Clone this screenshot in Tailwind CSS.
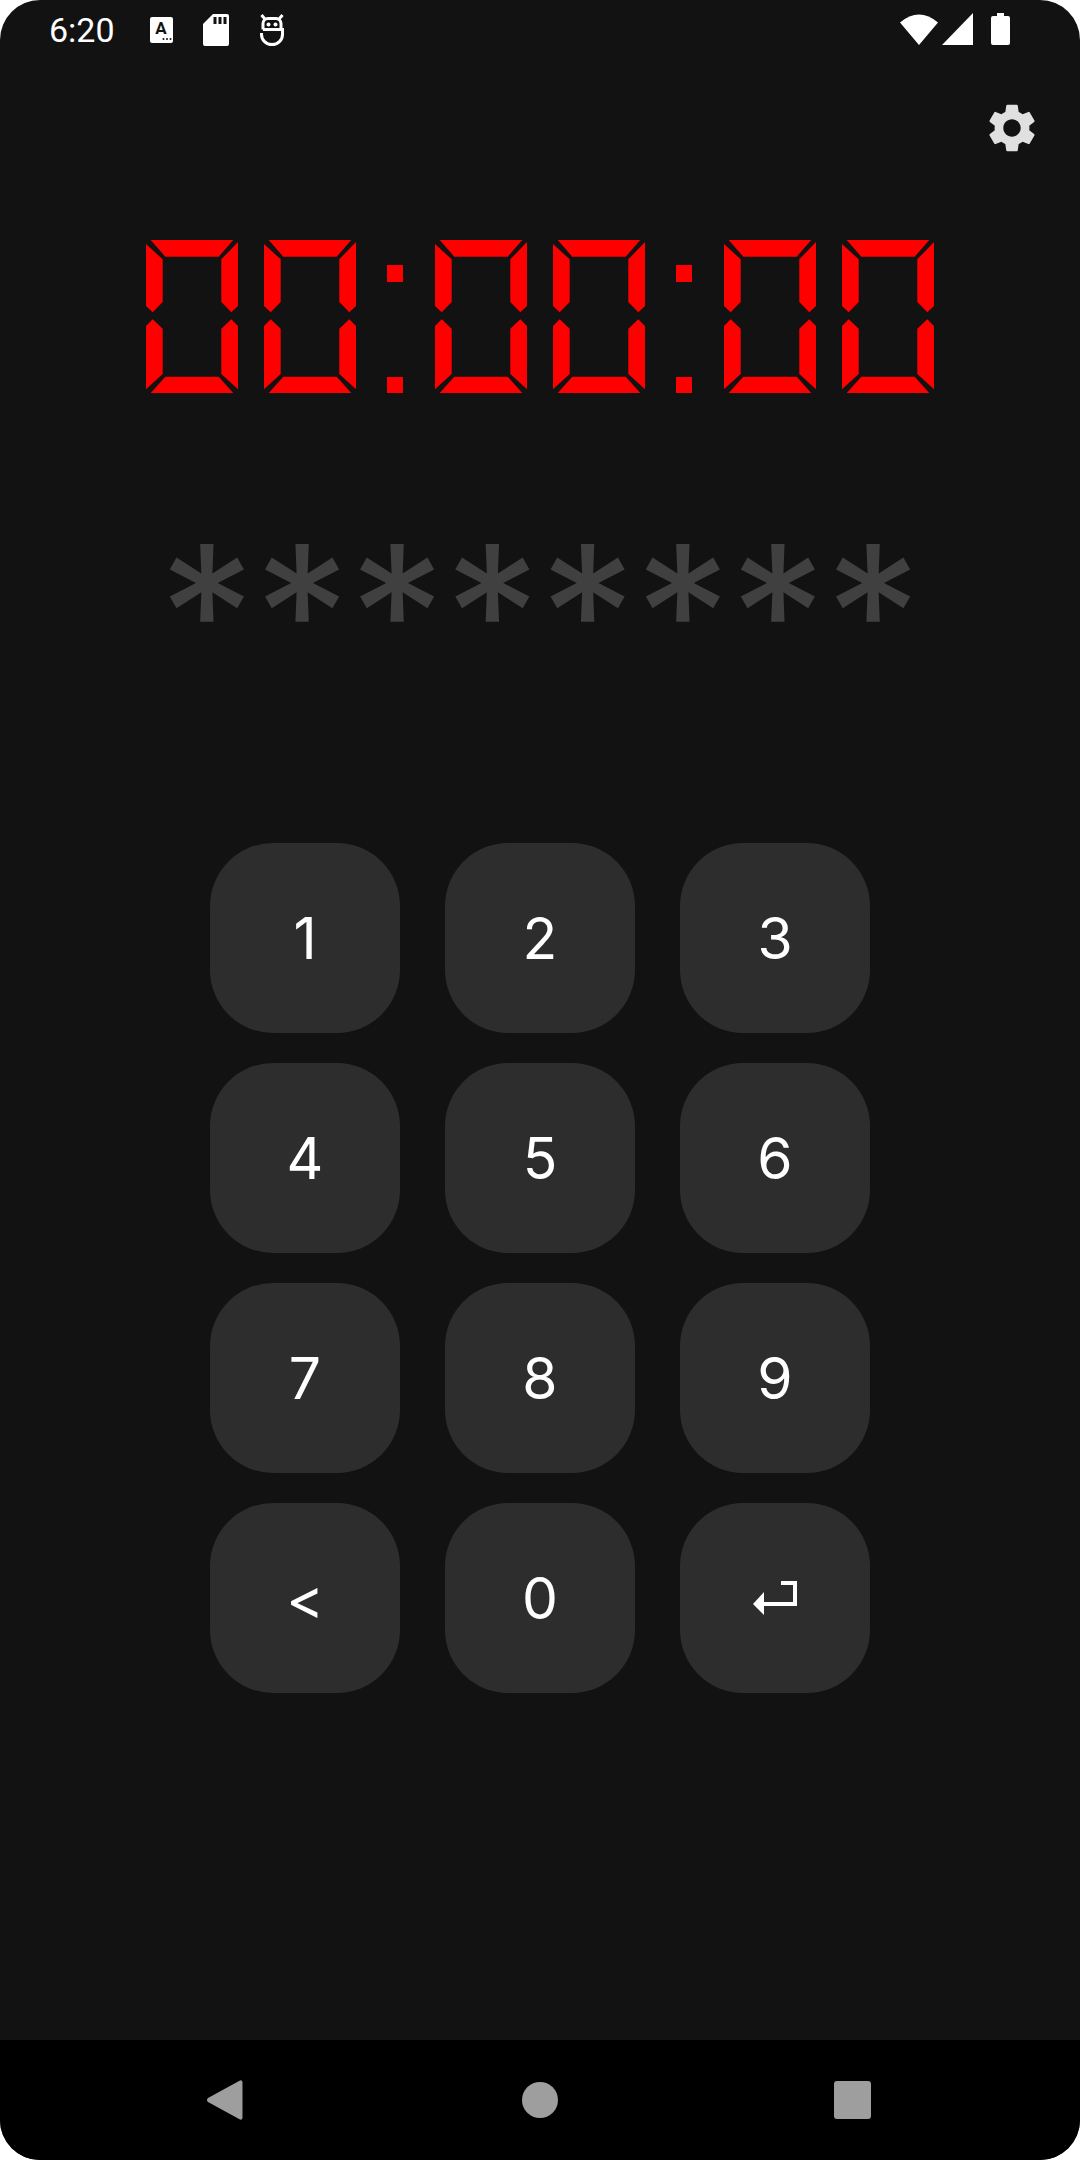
<!DOCTYPE html>
<html lang="en">
<head>
    <meta charset="UTF-8">
    <title>Timer lock</title>
    <script src="https://cdn.jsdelivr.net/npm/@tailwindcss/browser@4"></script>
</head>
<body class="bg-white">
    <div class="w-[1080px] h-[2160px] flex flex-col bg-[#121212] rounded-[40px] overflow-hidden font-['Inter',sans-serif] text-white">

        <!-- Status bar -->
        <div class="h-[60px] flex items-center pl-[49px] pr-[70px] shrink-0">
            <span class="text-[34px] leading-none font-['Roboto',sans-serif] w-[101px]">6:20</span>
            <svg width="23" height="26" viewBox="0 0 23 26"><rect width="23" height="26" rx="2" fill="#fff"/><text x="11" y="17" text-anchor="middle" font-family="Roboto" font-weight="700" font-size="17" fill="#121212">A</text><circle cx="13.500" cy="22" r="1" fill="#121212"/><circle cx="17" cy="22" r="1" fill="#121212"/><circle cx="20.500" cy="22" r="1" fill="#121212"/></svg>
            <svg class="ml-[30px]" width="26" height="32" viewBox="0 0 26 32"><path d="M10 0h14a2 2 0 0 1 2 2v28a2 2 0 0 1-2 2H2a2 2 0 0 1-2-2V10z" fill="#fff"/><rect x="10.500" y="3" width="3" height="7" fill="#121212"/><rect x="15.500" y="3" width="3" height="7" fill="#121212"/><rect x="20.500" y="3" width="3" height="7" fill="#121212"/></svg>
            <svg class="ml-[31px]" width="24" height="32" viewBox="0 0 24 32" fill="none" stroke="#fff" stroke-width="3"><path d="M3 15.500V9.500a5 5 0 0 1 5-5h8a5 5 0 0 1 5 5v6M1.500 1l3 3.500M22.500 1l-3 3.500"/><path d="M3 15.500h19.500v5a10.500 10 0 0 1-21 0V19"/><circle cx="8.500" cy="10.500" r="2" fill="#fff" stroke="none"/><circle cx="15.500" cy="10.500" r="2" fill="#fff" stroke="none"/></svg>
            <div class="ml-auto flex items-center -mt-[2px]">
                <svg width="38" height="32" viewBox="0 0 38 32"><path d="M0 9.500Q19-6.500 38 9.500L19 32z" fill="#fff"/></svg>
                <svg class="ml-[4px]" width="31" height="32" viewBox="0 0 31 32"><path d="M31 0v32H0z" fill="#fff"/></svg>
                <svg class="ml-[18px]" width="19" height="32" viewBox="0 0 19 32"><path d="M6 0h7v3h4a2 2 0 0 1 2 2v25a2 2 0 0 1-2 2H2a2 2 0 0 1-2-2V5a2 2 0 0 1 2-2h4z" fill="#fff"/></svg>
            </div>
        </div>

        <!-- Settings -->
        <div class="flex justify-end pr-[39px] pt-[39px] shrink-0">
            <svg width="58" height="58" viewBox="0 0 24 24" fill="#e0e0e0"><path d="M19.140 12.940c.04-.3.060-.61.060-.94 0-.32-.02-.64-.07-.94l2.030-1.580a.49.49 0 0 0 .12-.61l-1.920-3.320a.488.488 0 0 0-.59-.22l-2.390.96c-.5-.38-1.030-.7-1.620-.94l-.36-2.540a.484.484 0 0 0-.48-.41h-3.840c-.24 0-.43.170-.47.410l-.36 2.540c-.59.240-1.130.570-1.620.94l-2.390-.96c-.22-.08-.47 0-.59.220L2.740 8.870c-.12.210-.08.470.12.610l2.030 1.580c-.05.300-.09.630-.09.940s.02.640.07.940l-2.030 1.580a.49.49 0 0 0-.12.610l1.920 3.320c.12.220.37.290.59.220l2.390-.96c.5.380 1.030.7 1.620.94l.36 2.540c.05.240.24.410.48.410h3.840c.24 0 .44-.17.47-.41l.36-2.540c.59-.24 1.130-.56 1.620-.94l2.390.96c.22.080.47 0 .59-.22l1.920-3.320c.12-.22.070-.47-.12-.61l-2.010-1.580zM12 15.600c-1.980 0-3.600-1.620-3.600-3.600s1.620-3.600 3.600-3.600 3.600 1.620 3.600 3.600-1.620 3.600-3.600 3.600z"/></svg>
        </div>

        <!-- LED timer: segments are CSS shapes -->
        <div role="timer" aria-label="00:00:00" class="mt-[83px] ml-[146px] h-[153px] flex shrink-0">
            <div class="relative w-[92px] h-[153px]">
                <div class="absolute inset-0 bg-[#ff0000] [clip-path:polygon(4.700px_0,87.300px_0,72.700px_16.700px,19.300px_16.700px)]"></div>
                <div class="absolute inset-0 bg-[#ff0000] [clip-path:polygon(0_4px,16.700px_19.300px,16.700px_62px,6.700px_72.300px,0_66px)]"></div>
                <div class="absolute inset-0 bg-[#ff0000] [clip-path:polygon(92px_2px,75.300px_19.300px,75.300px_62px,85.300px_72.300px,92px_66px)]"></div>
                <div class="absolute inset-0 bg-[#ff0000] [clip-path:polygon(0_86px,6.700px_79.300px,16.700px_88.700px,16.700px_134px,0_149.300px)]"></div>
                <div class="absolute inset-0 bg-[#ff0000] [clip-path:polygon(92px_86px,85.300px_79.300px,75.300px_88.700px,75.300px_134px,92px_149.300px)]"></div>
                <div class="absolute inset-0 bg-[#ff0000] [clip-path:polygon(4.700px_153px,19.300px_136.700px,72.700px_136.700px,87.300px_153px)]"></div>
            </div>
            <div class="relative w-[92px] h-[153px] ml-[26px]">
                <div class="absolute inset-0 bg-[#ff0000] [clip-path:polygon(4.700px_0,87.300px_0,72.700px_16.700px,19.300px_16.700px)]"></div>
                <div class="absolute inset-0 bg-[#ff0000] [clip-path:polygon(0_4px,16.700px_19.300px,16.700px_62px,6.700px_72.300px,0_66px)]"></div>
                <div class="absolute inset-0 bg-[#ff0000] [clip-path:polygon(92px_2px,75.300px_19.300px,75.300px_62px,85.300px_72.300px,92px_66px)]"></div>
                <div class="absolute inset-0 bg-[#ff0000] [clip-path:polygon(0_86px,6.700px_79.300px,16.700px_88.700px,16.700px_134px,0_149.300px)]"></div>
                <div class="absolute inset-0 bg-[#ff0000] [clip-path:polygon(92px_86px,85.300px_79.300px,75.300px_88.700px,75.300px_134px,92px_149.300px)]"></div>
                <div class="absolute inset-0 bg-[#ff0000] [clip-path:polygon(4.700px_153px,19.300px_136.700px,72.700px_136.700px,87.300px_153px)]"></div>
            </div>
            <div class="w-[16px] h-[153px] ml-[31px] pt-[25px] flex flex-col justify-between">
                <div class="h-[17px] bg-[#ff0000]"></div>
                <div class="h-[16px] bg-[#ff0000]"></div>
            </div>
            <div class="relative w-[92px] h-[153px] ml-[32px]">
                <div class="absolute inset-0 bg-[#ff0000] [clip-path:polygon(4.700px_0,87.300px_0,72.700px_16.700px,19.300px_16.700px)]"></div>
                <div class="absolute inset-0 bg-[#ff0000] [clip-path:polygon(0_4px,16.700px_19.300px,16.700px_62px,6.700px_72.300px,0_66px)]"></div>
                <div class="absolute inset-0 bg-[#ff0000] [clip-path:polygon(92px_2px,75.300px_19.300px,75.300px_62px,85.300px_72.300px,92px_66px)]"></div>
                <div class="absolute inset-0 bg-[#ff0000] [clip-path:polygon(0_86px,6.700px_79.300px,16.700px_88.700px,16.700px_134px,0_149.300px)]"></div>
                <div class="absolute inset-0 bg-[#ff0000] [clip-path:polygon(92px_86px,85.300px_79.300px,75.300px_88.700px,75.300px_134px,92px_149.300px)]"></div>
                <div class="absolute inset-0 bg-[#ff0000] [clip-path:polygon(4.700px_153px,19.300px_136.700px,72.700px_136.700px,87.300px_153px)]"></div>
            </div>
            <div class="relative w-[92px] h-[153px] ml-[26px]">
                <div class="absolute inset-0 bg-[#ff0000] [clip-path:polygon(4.700px_0,87.300px_0,72.700px_16.700px,19.300px_16.700px)]"></div>
                <div class="absolute inset-0 bg-[#ff0000] [clip-path:polygon(0_4px,16.700px_19.300px,16.700px_62px,6.700px_72.300px,0_66px)]"></div>
                <div class="absolute inset-0 bg-[#ff0000] [clip-path:polygon(92px_2px,75.300px_19.300px,75.300px_62px,85.300px_72.300px,92px_66px)]"></div>
                <div class="absolute inset-0 bg-[#ff0000] [clip-path:polygon(0_86px,6.700px_79.300px,16.700px_88.700px,16.700px_134px,0_149.300px)]"></div>
                <div class="absolute inset-0 bg-[#ff0000] [clip-path:polygon(92px_86px,85.300px_79.300px,75.300px_88.700px,75.300px_134px,92px_149.300px)]"></div>
                <div class="absolute inset-0 bg-[#ff0000] [clip-path:polygon(4.700px_153px,19.300px_136.700px,72.700px_136.700px,87.300px_153px)]"></div>
            </div>
            <div class="w-[16px] h-[153px] ml-[31px] pt-[25px] flex flex-col justify-between">
                <div class="h-[17px] bg-[#ff0000]"></div>
                <div class="h-[16px] bg-[#ff0000]"></div>
            </div>
            <div class="relative w-[92px] h-[153px] ml-[32px]">
                <div class="absolute inset-0 bg-[#ff0000] [clip-path:polygon(4.700px_0,87.300px_0,72.700px_16.700px,19.300px_16.700px)]"></div>
                <div class="absolute inset-0 bg-[#ff0000] [clip-path:polygon(0_4px,16.700px_19.300px,16.700px_62px,6.700px_72.300px,0_66px)]"></div>
                <div class="absolute inset-0 bg-[#ff0000] [clip-path:polygon(92px_2px,75.300px_19.300px,75.300px_62px,85.300px_72.300px,92px_66px)]"></div>
                <div class="absolute inset-0 bg-[#ff0000] [clip-path:polygon(0_86px,6.700px_79.300px,16.700px_88.700px,16.700px_134px,0_149.300px)]"></div>
                <div class="absolute inset-0 bg-[#ff0000] [clip-path:polygon(92px_86px,85.300px_79.300px,75.300px_88.700px,75.300px_134px,92px_149.300px)]"></div>
                <div class="absolute inset-0 bg-[#ff0000] [clip-path:polygon(4.700px_153px,19.300px_136.700px,72.700px_136.700px,87.300px_153px)]"></div>
            </div>
            <div class="relative w-[92px] h-[153px] ml-[26px]">
                <div class="absolute inset-0 bg-[#ff0000] [clip-path:polygon(4.700px_0,87.300px_0,72.700px_16.700px,19.300px_16.700px)]"></div>
                <div class="absolute inset-0 bg-[#ff0000] [clip-path:polygon(0_4px,16.700px_19.300px,16.700px_62px,6.700px_72.300px,0_66px)]"></div>
                <div class="absolute inset-0 bg-[#ff0000] [clip-path:polygon(92px_2px,75.300px_19.300px,75.300px_62px,85.300px_72.300px,92px_66px)]"></div>
                <div class="absolute inset-0 bg-[#ff0000] [clip-path:polygon(0_86px,6.700px_79.300px,16.700px_88.700px,16.700px_134px,0_149.300px)]"></div>
                <div class="absolute inset-0 bg-[#ff0000] [clip-path:polygon(92px_86px,85.300px_79.300px,75.300px_88.700px,75.300px_134px,92px_149.300px)]"></div>
                <div class="absolute inset-0 bg-[#ff0000] [clip-path:polygon(4.700px_153px,19.300px_136.700px,72.700px_136.700px,87.300px_153px)]"></div>
            </div>
        </div>

        <!-- Code mask -->
        <div class="mt-[160px] h-[120px] flex justify-center items-center text-[190px] leading-none font-normal text-[#404040] shrink-0">********</div>

        <!-- Keypad -->
        <div class="mt-[170px] ml-[210px] grid grid-cols-[190px_190px_190px] auto-rows-[190px] gap-x-[45px] gap-y-[30px] text-[57px] font-[380] shrink-0">
            <div class="rounded-[63px] bg-[#2d2d2d] flex items-center justify-center pt-[2px]">1</div>
            <div class="rounded-[63px] bg-[#2d2d2d] flex items-center justify-center pt-[2px]">2</div>
            <div class="rounded-[63px] bg-[#2d2d2d] flex items-center justify-center pt-[2px]">3</div>
            <div class="rounded-[63px] bg-[#2d2d2d] flex items-center justify-center pt-[2px]">4</div>
            <div class="rounded-[63px] bg-[#2d2d2d] flex items-center justify-center pt-[2px]">5</div>
            <div class="rounded-[63px] bg-[#2d2d2d] flex items-center justify-center pt-[2px]">6</div>
            <div class="rounded-[63px] bg-[#2d2d2d] flex items-center justify-center pt-[2px]">7</div>
            <div class="rounded-[63px] bg-[#2d2d2d] flex items-center justify-center pt-[2px]">8</div>
            <div class="rounded-[63px] bg-[#2d2d2d] flex items-center justify-center pt-[2px]">9</div>
            <div class="rounded-[63px] bg-[#2d2d2d] flex items-center justify-center pt-[2px]">&lt;</div>
            <div class="rounded-[63px] bg-[#2d2d2d] flex items-center justify-center pt-[2px]">0</div>
            <div class="rounded-[63px] bg-[#2d2d2d] flex items-center justify-center">
                <svg width="44" height="34" viewBox="0 0 44 34" fill="#fff"><path d="M0 23L11 11v10h29V4H28V0h16v25H11v9z"/></svg>
            </div>
        </div>

        <!-- Nav bar -->
        <div class="mt-auto h-[120px] bg-black flex items-center shrink-0 pl-[207px]">
            <svg width="36" height="40" viewBox="0 0 36 40" fill="#9e9e9e"><path d="M1 18L33 0.500a2 2 0 0 1 2.500 1.500v36a2 2 0 0 1-2.500 1.500L1 22a2.500 2.500 0 0 1 0-4z"/></svg>
            <div class="ml-[279px] w-[36px] h-[36px] rounded-full bg-[#9e9e9e]"></div>
            <div class="ml-[276px] w-[37px] h-[38px] rounded-[3px] bg-[#9e9e9e]"></div>
        </div>
    </div>
</body>
</html>
